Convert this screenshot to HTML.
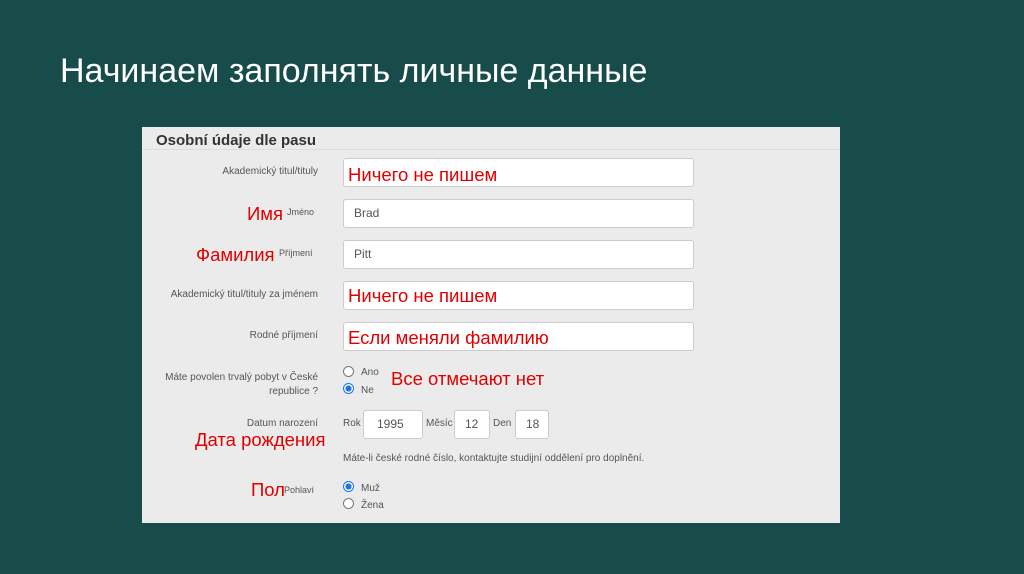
<!DOCTYPE html>
<html><head><meta charset="utf-8"><style>
body{margin:0;width:1024px;height:574px;background:#174c4a;position:relative;overflow:hidden;font-family:"Liberation Sans",Arial,sans-serif}
.a{position:absolute;white-space:nowrap}
h1{position:absolute;left:60px;top:52px;margin:0;font-weight:normal;font-size:34px;color:#fff}
.p{position:absolute;left:142px;top:127px;width:698px;height:396px;background:#ebebeb}
.lbl{font-size:10px;color:#555;text-align:right}
.sm{font-size:9px;color:#555}
.in{position:absolute;background:#fff;border:1px solid #ccc;border-radius:3px;box-sizing:border-box;font-size:12px;color:#555;padding-left:10px;line-height:26px}
.r{color:#e00000;font-size:18.5px}
.rad{position:absolute;width:9px;height:9px;border:1px solid #777;border-radius:50%;background:#fff}
.rad.on{border-color:#1a73e8;background:radial-gradient(circle,#1a73e8 45%,#fff 50%)}
</style></head><body>
<h1>Начинаем заполнять личные данные</h1>
<div class="p">
<div class="a" style="left:14px;top:5px;font-size:15px;font-weight:bold;color:#333">Osobní údaje dle pasu</div>
<div class="a" style="left:0;top:22px;width:698px;height:1px;background:#ddd"></div>
</div>
<div class="a lbl" style="top:166px;right:706px">Akademický titul/tituly</div>
<div class="in" style="left:343px;top:158px;width:351px;height:29px"></div>
<div class="a r" style="left:348px;top:164px">Ничего не пишем</div>

<div class="a r" style="left:247px;top:203px">Имя</div>
<div class="a sm" style="left:287px;top:207px">Jméno</div>
<div class="in" style="left:343px;top:199px;width:351px;height:29px">Brad</div>

<div class="a r" style="left:196px;top:244px">Фамилия</div>
<div class="a sm" style="left:279px;top:248px">Příjmení</div>
<div class="in" style="left:343px;top:240px;width:351px;height:29px">Pitt</div>

<div class="a lbl" style="top:289px;right:706px">Akademický titul/tituly za jménem</div>
<div class="in" style="left:343px;top:281px;width:351px;height:29px"></div>
<div class="a r" style="left:348px;top:285px">Ничего не пишем</div>

<div class="a lbl" style="top:330px;right:706px">Rodné příjmení</div>
<div class="in" style="left:343px;top:322px;width:351px;height:29px"></div>
<div class="a r" style="left:348px;top:327px">Если меняли фамилию</div>

<div class="a lbl" style="top:371px;right:706px;line-height:14px">Máte povolen trvalý pobyt v České<br>republice ?</div>
<div class="rad" style="left:343px;top:366px"></div><div class="a" style="left:361px;top:367px;font-size:10px;color:#555">Ano</div>
<div class="rad on" style="left:343px;top:383px"></div><div class="a" style="left:361px;top:385px;font-size:10px;color:#555">Ne</div>
<div class="a r" style="left:391px;top:368px">Все отмечают нет</div>

<div class="a lbl" style="top:418px;right:706px">Datum narození</div>
<div class="a" style="left:343px;top:418px;font-size:10px;color:#555">Rok</div>
<div class="in" style="left:363px;top:410px;width:60px;height:29px;padding-left:13px">1995</div>
<div class="a" style="left:426px;top:418px;font-size:10px;color:#555">Měsíc</div>
<div class="in" style="left:454px;top:410px;width:36px;height:29px;padding-left:10px">12</div>
<div class="a" style="left:493px;top:418px;font-size:10px;color:#555">Den</div>
<div class="in" style="left:515px;top:410px;width:34px;height:29px;padding-left:10px">18</div>
<div class="a r" style="left:195px;top:429px">Дата рождения</div>
<div class="a" style="left:343px;top:453px;font-size:10px;color:#555">Máte-li české rodné číslo, kontaktujte studijní oddělení pro doplnění.</div>

<div class="a r" style="left:251px;top:479px">Пол</div>
<div class="a sm" style="left:284px;top:485px">Pohlaví</div>
<div class="rad on" style="left:343px;top:481px"></div><div class="a" style="left:361px;top:483px;font-size:10px;color:#555">Muž</div>
<div class="rad" style="left:343px;top:498px"></div><div class="a" style="left:361px;top:500px;font-size:10px;color:#555">Žena</div>
</body></html>
